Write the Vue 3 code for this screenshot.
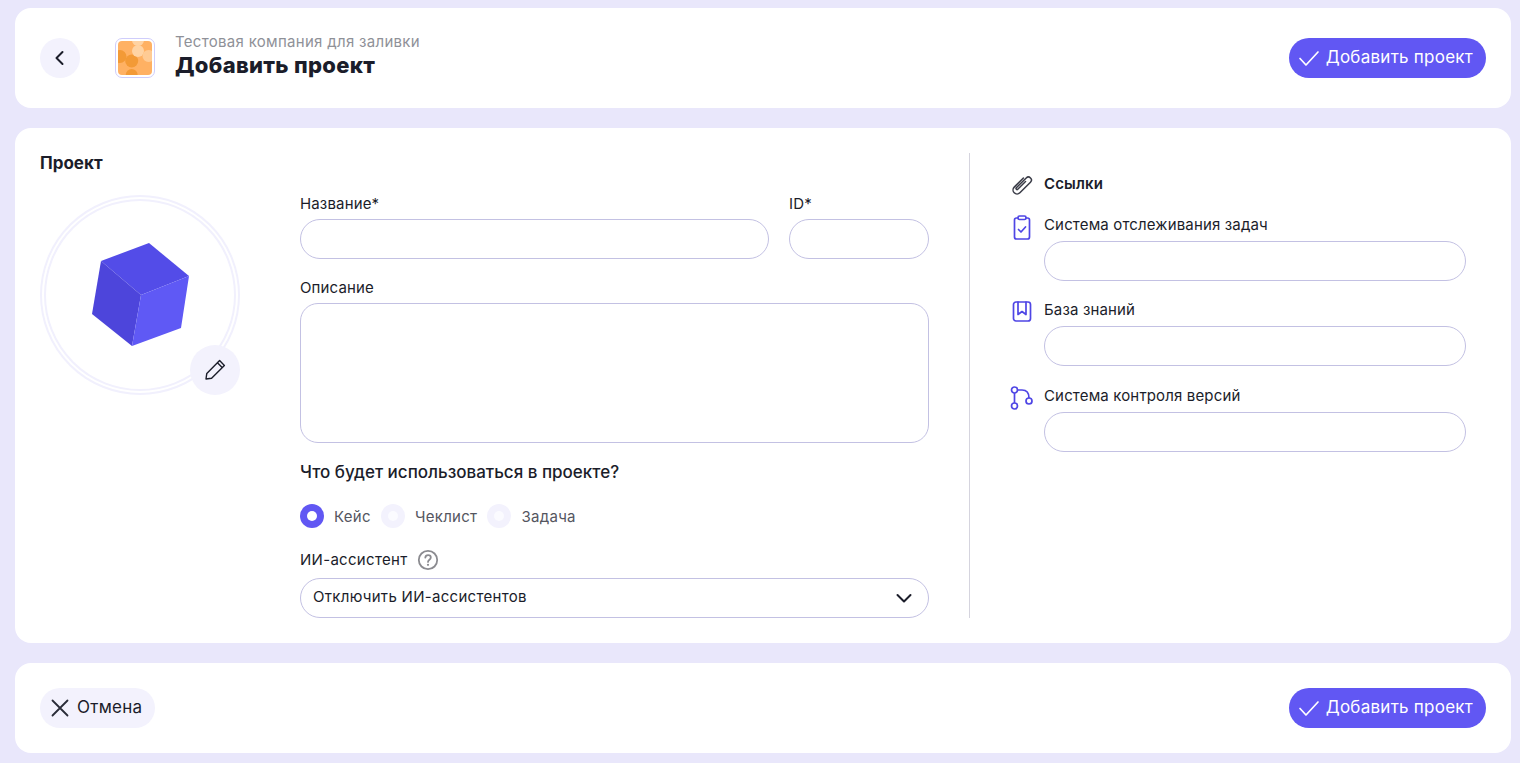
<template>
  <div class="page">
    <header class="card top-bar">
      <button class="round-btn back-btn" aria-label="Назад">
        <svg width="24" height="24" viewBox="0 0 24 24" fill="none" stroke="#1b1d2a" stroke-width="2" stroke-linecap="round" stroke-linejoin="round"><path d="M14.5 6l-6 6 6 6" /></svg>
      </button>
      <div class="company-logo">
        <svg width="34" height="34" viewBox="0 0 34 34">
          <rect width="34" height="34" fill="#ffb163" />
          <circle cx="2" cy="15.500" r="6.500" fill="#f39a36" />
          <circle cx="13.700" cy="20" r="6.500" fill="#f39a36" />
          <circle cx="13.700" cy="34" r="6" fill="#f39a36" />
          <circle cx="20" cy="-1" r="6" fill="#ffd3a3" />
          <circle cx="20" cy="10" r="6" fill="#ffd3a3" />
          <circle cx="30.500" cy="15" r="6" fill="#ffcb94" />
        </svg>
      </div>
      <div class="titles">
        <div class="company-name">Тестовая компания для заливки</div>
        <h1>Добавить проект</h1>
      </div>
      <button class="primary-btn">
        <svg width="24" height="24" viewBox="0 0 24 24" fill="none" stroke="#fff" stroke-width="1.700" stroke-linecap="round" stroke-linejoin="round"><path d="M3 12.500l6 6.500L21 6" /></svg>
        <span>Добавить проект</span>
      </button>
    </header>

    <main class="card content">
      <section class="project">
        <h2>Проект</h2>
        <div class="project-body">
          <div class="avatar">
            <svg width="100" height="105" viewBox="0 0 100 105">
              <path d="M57 1L97 34 49 53 9 19z" fill="#534ce8" />
              <path d="M9 19L49 53 40 104 0 72z" fill="#4d45db" />
              <path d="M49 53L97 34 89 86 40 104z" fill="#5f59f5" />
            </svg>
            <button class="round-btn edit-btn" aria-label="Изменить">
              <svg width="24" height="24" viewBox="0 0 24 24" fill="none" stroke="#1b1d2a" stroke-width="1.400" stroke-linejoin="round"><path d="M3 21l.8-5.600L16.600 2.600l4.800 4.800L8.600 20.200z" /><path d="M14.400 4.800l4.800 4.800" /></svg>
            </button>
          </div>

          <form class="fields" @submit.prevent>
            <div class="row">
              <label class="field grow">
                <span class="label">Название*</span>
                <input class="input" />
              </label>
              <label class="field id-field">
                <span class="label">ID*</span>
                <input class="input" />
              </label>
            </div>
            <label class="field">
              <span class="label">Описание</span>
              <textarea class="input textarea"></textarea>
            </label>

            <h3>Что будет использоваться в проекте?</h3>
            <div class="radios">
              <label v-for="opt in options" :key="opt" class="radio" @click="selected = opt">
                <span class="dot" :class="{ on: selected === opt }"></span>
                <span>{{ opt }}</span>
              </label>
            </div>

            <div class="label ai-label">
              ИИ-ассистент
              <svg width="22" height="22" viewBox="0 0 22 22" fill="none"><circle cx="11" cy="11" r="9.200" stroke="#8b8b90" stroke-width="1.800" /><path d="M8.300 8.600c.2-1.600 1.300-2.400 2.800-2.400 1.600 0 2.700.9 2.700 2.300 0 2.200-2.800 2.200-2.800 4.400" stroke="#8b8b90" stroke-width="1.800" stroke-linecap="round" /><circle cx="11" cy="15.800" r="1.100" fill="#8b8b90" /></svg>
            </div>
            <div class="input select">
              <span class="select-text">Отключить ИИ-ассистентов</span>
              <svg width="24" height="24" viewBox="0 0 24 24" fill="none" stroke="#1b1d2a" stroke-width="2" stroke-linecap="round" stroke-linejoin="round"><path d="M5.500 9l6.500 6.500L18.500 9" /></svg>
            </div>
          </form>
        </div>
      </section>

      <aside class="links">
        <div class="link-head">
          <svg class="clip" width="24" height="26" viewBox="0 0 24 26" fill="none" stroke="#3a3c47" stroke-width="1.500" stroke-linecap="round"><path transform="rotate(45 12 13)" d="M8 7v13a4 4 0 0 0 8 0V5a3 3 0 0 0-6 0v14a1 1 0 0 0 2 0V8" /></svg>
          <span>Ссылки</span>
        </div>

        <div class="link-row">
          <svg class="link-icon" width="24" height="26" viewBox="0 0 24 26" fill="none" stroke="#4f46e5" stroke-width="1.700" stroke-linecap="round" stroke-linejoin="round"><path d="M8 3H6.500C5 3 4.500 3.800 4.500 5v17c0 1.200.6 2 2 2h11c1.400 0 2-.8 2-2V5c0-1.200-.5-2-2-2H16" /><rect x="8" y="1" width="8" height="3.500" rx="1.500" /><path d="M8.500 14.500l2.500 2.500 4.500-5" /></svg>
          <label class="field grow">
            <span class="label">Система отслеживания задач</span>
            <input class="input" />
          </label>
        </div>
        <div class="link-row">
          <svg class="link-icon" width="24" height="26" viewBox="0 0 24 26" fill="none" stroke="#4f46e5" stroke-width="1.700" stroke-linecap="round" stroke-linejoin="round"><rect x="3.500" y="2" width="17" height="19" rx="2.500" /><path d="M8 2v12.500l4-3 4 3V2" /></svg>
          <label class="field grow">
            <span class="label">База знаний</span>
            <input class="input" />
          </label>
        </div>
        <div class="link-row">
          <svg class="link-icon" width="24" height="26" viewBox="0 0 24 26" fill="none" stroke="#4f46e5" stroke-width="1.700"><circle cx="4.500" cy="4" r="3" /><circle cx="4.500" cy="20" r="3" /><circle cx="19" cy="15" r="3" /><path d="M4.500 7v10M7.500 4H12c4 0 7 2.500 7 8" /></svg>
          <label class="field grow">
            <span class="label">Система контроля версий</span>
            <input class="input" />
          </label>
        </div>
      </aside>
    </main>

    <footer class="card bottom-bar">
      <button class="cancel-btn">
        <svg width="24" height="24" viewBox="0 0 24 24" fill="none" stroke="#2a2c38" stroke-width="1.800" stroke-linecap="round"><path d="M4.500 4.500l15 15M19.500 4.500l-15 15" /></svg>
        <span>Отмена</span>
      </button>
      <button class="primary-btn">
        <svg width="24" height="24" viewBox="0 0 24 24" fill="none" stroke="#fff" stroke-width="1.700" stroke-linecap="round" stroke-linejoin="round"><path d="M3 12.500l6 6.500L21 6" /></svg>
        <span>Добавить проект</span>
      </button>
    </footer>
  </div>
</template>

<script setup>
import { ref } from 'vue'

const options = ['Кейс', 'Чеклист', 'Задача']
const selected = ref('Кейс')
</script>

<style>
html, body { margin: 0; background: #e9e7fb; }
</style>

<style scoped>
.page {
  padding: 8px 9px 10px 15px;
  display: flex;
  flex-direction: column;
  gap: 20px;
  font-family: "Inter", "Noto Sans", sans-serif;
  font-size: 15px;
  letter-spacing: .15px;
  color: #1b1d2a;
}
.card { background: #fff; border-radius: 16px; }
button { font-family: inherit; letter-spacing: inherit; border: none; cursor: pointer; padding: 0; }

.top-bar { height: 100px; display: flex; align-items: center; padding: 0 25px; }
.round-btn {
  width: 40px; height: 40px; border-radius: 50%;
  background: #f3f2fd;
  display: flex; align-items: center; justify-content: center;
}
.company-logo {
  width: 40px; height: 40px; margin-left: 35px; box-sizing: border-box;
  border: 1px solid #cfcdfb; border-radius: 7px; padding: 2px; overflow: hidden;
}
.company-logo svg { display: block; border-radius: 4px; }
.titles { margin-left: 20px; margin-top: -4px; flex: 1; }
.company-name { font-size: 15px; line-height: 18px; color: #8f9198; letter-spacing: .3px; }
h1 { margin: 0; font-size: 22px; line-height: 28px; font-weight: 800; letter-spacing: .3px; }
.primary-btn {
  height: 40px; padding: 0 13px 0 8px; border-radius: 20px;
  background: #6157f3; color: #fff; font-size: 17px; letter-spacing: .25px;
  display: flex; align-items: center; gap: 5px;
}
.primary-btn span, .cancel-btn span { margin-bottom: 2px; }

.content { height: 515px; box-sizing: border-box; padding: 25px; display: flex; }
.project { width: 930px; flex: none; box-sizing: border-box; padding-right: 40px; border-right: 1px solid #d5d4de; }
h2 { margin: 0; font-size: 17px; line-height: 20px; font-weight: 700; letter-spacing: 0; }
.project-body { display: flex; margin-top: 22px; }
.avatar {
  position: relative; width: 200px; height: 200px; flex: none; box-sizing: border-box;
  border-radius: 50%; border: 6px double #f1f0fd;
  display: flex; align-items: center; justify-content: center;
}
.avatar > svg { margin-top: -1px; margin-left: 4px; }
.edit-btn { position: absolute; right: -6px; bottom: -6px; width: 50px; height: 50px; }
.fields { flex: 1; margin-left: 60px; margin-top: -1px; }
.row { display: flex; gap: 20px; }
.field { display: flex; flex-direction: column; margin-bottom: 19px; }
.grow { flex: 1; }
.id-field { width: 140px; }
.label { font-size: 15px; line-height: 20px; margin-bottom: 5px; color: #1b1d2a; }
.input {
  height: 40px; box-sizing: border-box; border: 1px solid #c3c1e3; border-radius: 20px;
  background: #fff; padding: 0 12px; font: inherit; outline: none; resize: none;
}
.textarea { height: 140px; border-radius: 18px; padding: 12px; display: block; }
h3 { margin: 0; font-size: 17px; line-height: 22px; font-weight: 500; margin-top: -1px; letter-spacing: 0; }
.radios { display: flex; margin-top: 21px; gap: 10px; letter-spacing: .3px; }
.radio { display: flex; align-items: center; gap: 10px; color: #55565f; cursor: pointer; }
.dot {
  width: 24px; height: 24px; border-radius: 50%; background: #f3f2fd;
  display: flex; align-items: center; justify-content: center;
}
.dot::after { content: ""; width: 10px; height: 10px; border-radius: 50%; background: #fbfbff; }
.dot.on { background: #6157f3; }
.dot.on::after { background: #fff; }
.ai-label { display: flex; align-items: center; gap: 10px; margin: 21px 0 7px; height: 22px; letter-spacing: .3px; }
.select { display: flex; align-items: center; justify-content: space-between; padding-right: 12px; letter-spacing: .3px; }
.select-text { margin-bottom: 4px; }

.links { flex: 1; padding-left: 40px; padding-right: 20px; padding-top: 20px; }
.link-head { display: flex; align-items: center; gap: 10px; font-weight: 600; height: 20px; margin-bottom: 22px; }
.clip { margin-top: 3px; }
.link-row { display: flex; gap: 10px; }
.link-row:last-child { margin-top: 1px; }
.link-icon { flex: none; }
.link-row .field { margin-bottom: 19px; }
.link-row .label { margin-bottom: 6px; }

.bottom-bar { height: 90px; display: flex; align-items: center; justify-content: space-between; padding: 0 25px; }
.cancel-btn {
  height: 40px; padding: 0 13px 0 8px; border-radius: 20px; background: #f3f2fd;
  color: #1b1d2a; font-size: 17px; letter-spacing: .25px; display: flex; align-items: center; gap: 5px;
}
</style>
